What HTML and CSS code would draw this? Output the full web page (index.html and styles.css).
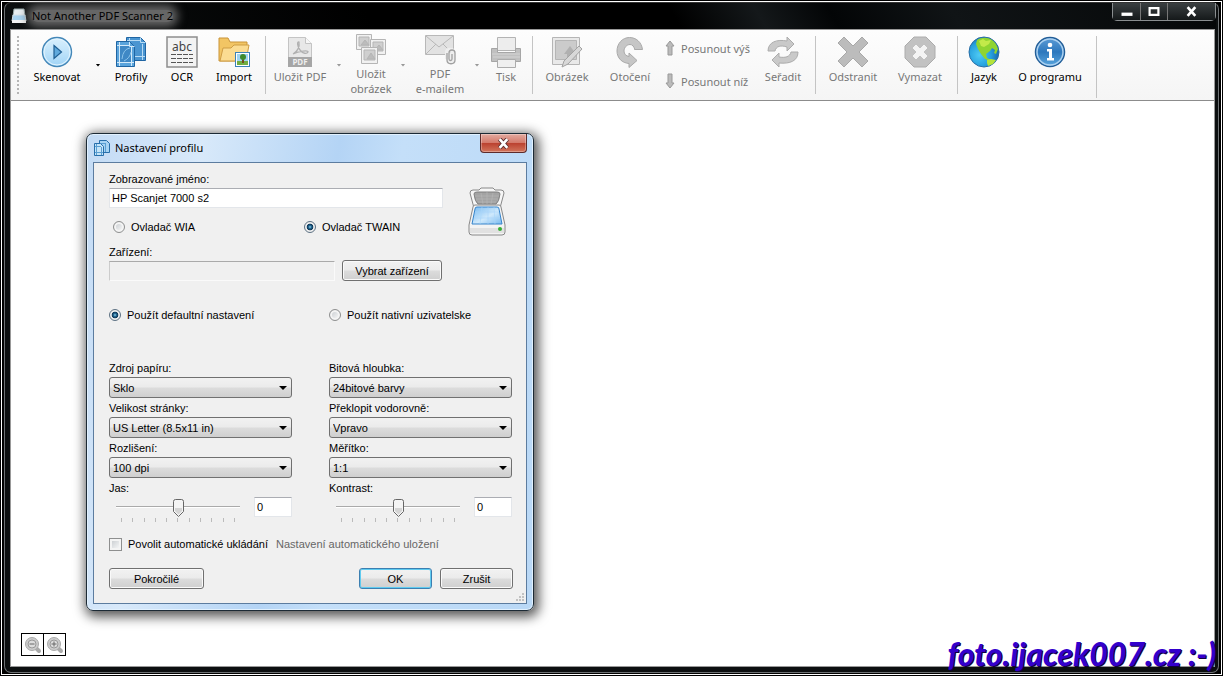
FILE: index.html
```html
<!DOCTYPE html>
<html lang="cs">
<head>
    <meta charset="UTF-8">
    <meta name="viewport" content="width=device-width, initial-scale=1.0">
    <title>Not Another PDF Scanner 2</title>
    <link rel="stylesheet" href="styles.css">
</head>
<body>

<div class="desktop">
<div class="window">
    <header class="titlebar">
        <svg class="title-icon" viewBox="0 0 16 16">
            <path d="M3 1h10l1 7H2z" fill="#e8eef2" stroke="#9aa"/>
            <path d="M2 7h12l1 6H1z" fill="#a9d3f0" stroke="#d8e2e8"/>
            <path d="M1 12h14v3H1z" fill="#f4f4f4"/>
        </svg>
        <h1 class="title">Not Another PDF Scanner 2</h1>
        <div class="window-controls">
            <button aria-label="Minimalizovat"><svg viewBox="0 0 12 10"><path d="M1 6h10v3H1z" fill="#fff"/></svg></button>
            <button aria-label="Maximalizovat"><svg viewBox="0 0 12 10"><path d="M2 2h8v6H2z" fill="none" stroke="#fff" stroke-width="2"/></svg></button>
            <button class="wide" aria-label="Zavřít"><svg viewBox="0 0 12 10"><path d="M2 1l7 8M9 1L2 9" stroke="#fff" stroke-width="2.4"/></svg></button>
        </div>
    </header>

    <main class="client">
        <nav class="toolbar">
            <span class="grip"></span>
            <button class="tool w-72">
                <svg viewBox="0 0 32 32">
                    <defs><linearGradient id="play" x2="0" y2="1"><stop stop-color="#d9f0fd"/><stop offset=".5" stop-color="#bfe3fa"/><stop offset="1" stop-color="#9fd3f6"/></linearGradient></defs>
                    <circle cx="16" cy="16" r="14.5" fill="url(#play)" stroke="#4487b8" stroke-width="1.4"/>
                    <circle cx="16" cy="16" r="13" fill="none" stroke="#e3f4fe"/>
                    <path d="M13 9.500l7.500 6.500-7.500 6.500z" fill="#5fa9dc" stroke="#1f5f93" stroke-width="1.200"/>
                </svg>
                Skenovat
            </button>
            <button class="arrow dark" aria-label="Další možnosti skenování"></button>
            <button class="tool w-56">
                <svg viewBox="0 0 32 32">
                    <path d="M11.500 1.500h14l5 5v18h-19z" fill="#4a95d1" stroke="#1f65a3"/>
                    <path d="M25.500 1.500v5h5M14.500 2v22M27.500 8v16M12 4.500h13M12 20.500h18" fill="none" stroke="#b9dcf5"/>
                    <path d="M1.500 5.500h13l5 5v20h-18z" fill="#5aa4dc" stroke="#1f65a3"/>
                    <path d="M5 10h11v17H5z" fill="#3f88c5"/>
                    <path d="M4.500 6v24M16.500 11v19M2 9.500h12M2 26.500h17M14.500 6v4.500h5" fill="none" stroke="#d3eafa"/>
                    <path d="M7 23q1-10 8-11M9 25q6-3 7-9" fill="none" stroke="#8cc3ea"/>
                </svg>
                Profily
            </button>
            <button class="tool w-46">
                <svg viewBox="0 0 32 32">
                    <rect x="1" y="1" width="30" height="30" fill="#f3f3f3" stroke="#8d8d8d" stroke-width="1.500"/>
                    <text x="16" y="14.500" class="abc">abc</text>
                    <path d="M5 18.500h22M5 22.500h22M5 26.500h22" stroke="#555" stroke-dasharray="5 1"/>
                </svg>
                OCR
            </button>
            <button class="tool w-58">
                <svg viewBox="0 0 32 32">
                    <path d="M1 25V2h9l2 4h17v19z" fill="#f2c564" stroke="#c99439"/>
                    <path d="M2 25l3-13h8l3-3h15l-3 16z" fill="#fbdc92" stroke="#cf9d45"/>
                    <rect x="17.500" y="16.500" width="14" height="14" fill="#fff" stroke="#3b82b8"/>
                    <path d="M19 18h11v11H19z" fill="#9ed4f2"/>
                    <path d="M19 25h11v4H19z" fill="#71ad42"/>
                    <path d="M24 22h2v5h-2z" fill="#744c20"/>
                    <circle cx="25" cy="21" r="3" fill="#3e8a2c"/>
                </svg>
                Import
            </button>
            <span class="separator first"></span>

            <button class="tool w-66" disabled>
                <svg viewBox="0 0 32 32">
                    <path d="M4.500 1.500h17l6 6v23h-23z" fill="#e8e8e8" stroke="#c4c4c4"/>
                    <path d="M21.500 1.500v6h6" fill="#f7f7f7" stroke="#c4c4c4"/>
                    <path d="M9 18c4-2 7-7 6-12-2-1-2 4 1 8s7 4 8 2-9-1-15 2z" fill="none" stroke="#b0b0b0" stroke-width="1.300"/>
                    <path d="M4 21h24v10H4z" fill="#a6a6a6"/>
                    <text x="16" y="29" class="pdf">PDF</text>
                </svg>
                Uložit PDF
            </button>
            <button class="arrow" aria-label="Možnosti PDF" disabled></button>
            <button class="tool tall w-52" disabled>
                <svg viewBox="0 0 32 32">
                    <g fill="#f1f1f1" stroke="#b5b5b5">
                        <path d="M1.500 1.500h15v15h-15z"/><path d="M4 4h10v9H4z" fill="#cfcfcf"/><path d="M6 12l4-5 4 5z" fill="#bcbcbc"/>
                        <path d="M15.500 6.500h15v15h-15z"/><path d="M18 9h10v9H18z" fill="#cfcfcf"/><path d="M20 17l4-5 4 5z" fill="#bcbcbc"/>
                        <path d="M6.500 14.500h16v16h-16z"/><path d="M9 17h11v10H9z" fill="#cfcfcf"/><path d="M12 26l4-6 4 6z" fill="#bcbcbc"/>
                    </g>
                </svg>
                Uložit<br>obrázek
            </button>
            <button class="arrow" aria-label="Možnosti obrázku" disabled></button>
            <button class="tool tall w-62" disabled>
                <svg viewBox="0 0 32 32">
                    <path d="M1.500 2.500h28v19h-28z" fill="#e2e2e2" stroke="#b8b8b8"/>
                    <path d="M2 3l13 11L29 3M2 21l10-10M29 21L19 11" fill="none" stroke="#b8b8b8"/>
                    <path d="M23 26v-7c0-3 6-3 6 0v8c0 3-4 3-4 0v-7" fill="none" stroke="#eee" stroke-width="4"/>
                    <path d="M23 20v7c0 5 8 5 8 0v-7c0-4-6-4-6 0v6c0 2 3 2 3 0v-5" fill="none" stroke="#a0a0a0" stroke-width="1.300"/>
                </svg>
                PDF<br>e-mailem
            </button>
            <button class="arrow" aria-label="Možnosti e-mailu" disabled></button>
            <button class="tool w-46" disabled>
                <svg viewBox="0 0 32 32">
                    <path d="M7.500 1.500h18v13h-18z" fill="#ededed" stroke="#b3b3b3"/>
                    <path d="M1.500 12.500h6v4h18v-4h5v13h-29z" fill="#c0c0c0" stroke="#a6a6a6"/>
                    <path d="M2 18h28M3 21h27" stroke="#d4d4d4"/>
                    <path d="M7.500 23.500h18v8h-18z" fill="#efefef" stroke="#acacac"/>
                </svg>
                Tisk
            </button>
            <span class="separator"></span>

            <button class="tool w-64" disabled>
                <svg viewBox="0 0 32 32">
                    <path d="M1.500 1.500h27v27h-27z" fill="#e9e9e9" stroke="#b5b5b5"/>
                    <path d="M4.500 4.500h21v19h-21z" fill="#cbcbcb" stroke="#b5b5b5"/>
                    <path d="M16 23v-5h-3l6-8 6 8h-3v5z" fill="#b0b0b0"/>
                    <path d="M28 10l3 3-14 15-6 3 2-6z" fill="#d8d8d8" stroke="#a3a3a3"/>
                </svg>
                Obrázek
            </button>
            <button class="tool w-62" disabled>
                <svg viewBox="0 0 32 32">
                    <path d="M21 13.500h7.500C27.500 6 22 1.500 15.500 1.500 8 1.500 3 8 3 15s5 12 12 12.500v4l8-7-8-7.500v3.500c-3-.5-5-2.500-5-5.500s2.500-6.500 6-6.500c2.500 0 4 2 5 5.500z" fill="#c6c6c6" stroke="#a9a9a9"/>
                </svg>
                Otočení
            </button>
            <div class="move">
                <button disabled><svg viewBox="0 0 10 16"><path d="M5 1l4 5H7v9H3V6H1z"/></svg>Posunout výš</button>
                <button disabled><svg viewBox="0 0 10 16"><path d="M5 15L1 10h2V1h4v9h2z"/></svg>Posunout níž</button>
            </div>
            <button class="tool w-56" disabled>
                <svg viewBox="0 0 32 32">
                    <path d="M1 15C1 6 10 3 20 5V1l7 7-7 7v-4c-6-2-11-1-12 4z" fill="#c9c9c9" stroke="#acacac"/>
                    <path d="M31 16c0 9-8 12-19 11v4l-7-7 7-7v4c6 1 11 0 12-5z" fill="#c9c9c9" stroke="#acacac"/>
                </svg>
                Seřadit
            </button>
            <span class="separator wide"></span>

            <button class="tool w-68" disabled>
                <svg viewBox="0 0 32 32"><path d="M7 1l9 9 9-9 6 6-9 9 9 9-6 6-9-9-9 9-6-6 9-9-9-9z" fill="#bcbcbc" stroke="#a8a8a8"/></svg>
                Odstranit
            </button>
            <button class="tool w-66" disabled>
                <svg viewBox="0 0 32 32">
                    <path d="M10 1h12l9 9v12l-9 9H10l-9-9V10z" fill="#c2c2c2" stroke="#acacac"/>
                    <path d="M12 8l4 4 4-4 4 4-4 4 4 4-4 4-4-4-4 4-4-4 4-4-4-4z" fill="#f4f4f4" stroke="#b0b0b0" stroke-width=".6"/>
                </svg>
                Vymazat
            </button>
            <span class="separator wide"></span>

            <button class="tool w-46">
                <svg viewBox="0 0 32 32">
                    <defs><radialGradient id="globe" cx=".35" cy=".6" r=".65"><stop stop-color="#4fcbf4"/><stop offset=".6" stop-color="#259fdd"/><stop offset="1" stop-color="#1a68ad"/></radialGradient></defs>
                    <circle cx="16" cy="16" r="15" fill="url(#globe)" stroke="#2a6ea6"/>
                    <path d="M9 4c4-3 11-3 15 0 3 2 5 5 6 9l-2 5-2-1 1-3-3-2-2 3-4 3 1 4 4 2v1l-6-2-4-5-3-5-2-5z" fill="#8fd431"/>
                    <path d="M19 24l4-1 5 1-3 4-5 2-1-3z" fill="#b5e339"/>
                    <path d="M11 5l4-2 3 2 5-1-2 4-5 3-3-1z" fill="#c3ea4a"/>
                </svg>
                Jazyk
            </button>
            <button class="tool w-86">
                <svg viewBox="0 0 32 32">
                    <defs><linearGradient id="info" x2="0" y2="1"><stop stop-color="#5c9cd6"/><stop offset=".5" stop-color="#2d78bd"/><stop offset="1" stop-color="#5ba7de"/></linearGradient></defs>
                    <circle cx="16" cy="16" r="14.500" fill="url(#info)" stroke="#235e97" stroke-width="1.500"/>
                    <circle cx="16" cy="16" r="13" fill="none" stroke="#acd1f0" stroke-width="1.500"/>
                    <circle cx="16" cy="9" r="2.300" fill="#fff"/>
                    <path d="M13 13h5v9h2v2.500h-7V22h2v-6.500h-2z" fill="#fff"/>
                </svg>
                O programu
            </button>
            <span class="separator end"></span>
        </nav>

        <section class="canvas">
            <div class="zoom-buttons">
                <button aria-label="Oddálit"><svg viewBox="0 0 18 18"><path d="M11 11l4 4" stroke="#aaa" stroke-width="4" stroke-linecap="round"/><circle cx="8" cy="8" r="6.500" fill="#ccc" stroke="#aaa"/><circle cx="8" cy="8" r="4" fill="#ddd" stroke="#999"/><path d="M5.500 8h5" stroke="#666"/></svg></button>
                <button aria-label="Přiblížit"><svg viewBox="0 0 18 18"><path d="M11 11l4 4" stroke="#aaa" stroke-width="4" stroke-linecap="round"/><circle cx="8" cy="8" r="6.500" fill="#ccc" stroke="#aaa"/><circle cx="8" cy="8" r="4" fill="#ddd" stroke="#999"/><path d="M5.500 8h5M8 5.500v5" stroke="#666"/></svg></button>
            </div>

            <div class="dialog" role="dialog" aria-labelledby="dialogTitle">
                <div class="dialog-title">
                    <svg viewBox="0 0 17 16">
                        <path d="M6.500.5h7l3 3v9h-10z" fill="#a6d3f3" stroke="#276fab"/>
                        <path d="M1.500 3.500h6l3 3v9h-9z" fill="#c5e4f8" stroke="#276fab"/>
                        <path d="M3.500 4v11M8.500 7v8M2 6.500h6M2 12.500h8M12.500 3v9M8 3.500h5" stroke="#5a9fd2" fill="none"/>
                    </svg>
                    <h2 id="dialogTitle">Nastavení profilu</h2>
                    <button class="dialog-close" aria-label="Zavřít"><svg viewBox="0 0 12 10"><path d="M2 1l7 8M9 1L2 9" stroke="#5b3030" stroke-width="4"/><path d="M2 1l7 8M9 1L2 9" stroke="#fff" stroke-width="2.400"/></svg></button>
                </div>
                <form class="dialog-body">
                    <div class="top">
                        <div class="top-fields">
                            <label for="name">Zobrazované jméno:</label>
                            <input class="text" type="text" id="name" value="HP Scanjet 7000 s2">
                            <div class="drivers">
                                <label class="choice"><input type="radio" name="driver">Ovladač WIA</label>
                                <label class="choice"><input type="radio" name="driver" checked>Ovladač TWAIN</label>
                            </div>
                            <label for="device">Zařízení:</label>
                            <div class="device">
                                <input class="text" type="text" id="device" disabled>
                                <button type="button" class="btn">Vybrat zařízení</button>
                            </div>
                        </div>
                        <svg class="scanner" viewBox="0 0 38 50">
                            <defs><linearGradient id="glass" x2="1" y2="1"><stop stop-color="#78baf0"/><stop offset=".55" stop-color="#cfe9fc"/><stop offset="1" stop-color="#79b9ee"/></linearGradient></defs>
                            <path d="M2 7q0-3 3-3h6l2-2h12l2 2h6q3 0 3 3l-4 15H6z" fill="#f6f6f6" stroke="#888"/>
                            <path d="M6 8q0-2 3-2h20q3 0 3 2-1 8-4 10H10Q7 16 6 8z" fill="#a3a3a3" stroke="#808080"/>
                            <path d="M7 10h24M8 13h22M10 16h18M13 7l2 11M19 6v12M25 7l-2 11" stroke="#b8b8b8" fill="none" stroke-width=".6"/>
                            <path d="M7 19h24q2 0 2 2l4 18v7q0 3-3 3H4q-3 0-3-3v-7l4-18q0-2 2-2z" fill="#f3f3f3" stroke="#888"/>
                            <path d="M9 21h20q2 0 2 2l3 15H4l3-15q0-2 2-2z" fill="url(#glass)" stroke="#3684cb"/>
                            <path d="M7 26h24M6 32h26M14 21l-2 17M20 21v17M26 21l1 17" stroke="#a7d5fa" stroke-width=".6"/>
                            <path d="M2 42h34v5H2z" fill="#e1e1e1"/>
                            <circle cx="32" cy="43" r="2" fill="#38ae35"/>
                        </svg>
                    </div>

                    <div class="columns modes">
                        <label class="choice"><input type="radio" name="mode" checked>Použít defaultní nastavení</label>
                        <label class="choice"><input type="radio" name="mode">Použít nativní uzivatelske</label>
                    </div>

                    <div class="columns">
                        <div class="field">
                            <label for="source">Zdroj papíru:</label>
                            <select id="source"><option>Sklo</option></select>
                        </div>
                        <div class="field">
                            <label for="depth">Bitová hloubka:</label>
                            <select id="depth"><option>24bitové barvy</option></select>
                        </div>
                        <div class="field">
                            <label for="size">Velikost stránky:</label>
                            <select id="size"><option>US Letter (8.5x11 in)</option></select>
                        </div>
                        <div class="field">
                            <label for="flip">Překlopit vodorovně:</label>
                            <select id="flip"><option>Vpravo</option></select>
                        </div>
                        <div class="field">
                            <label for="resolution">Rozlišení:</label>
                            <select id="resolution"><option>100 dpi</option></select>
                        </div>
                        <div class="field">
                            <label for="scale">Měřítko:</label>
                            <select id="scale"><option>1:1</option></select>
                        </div>
                        <div class="field">
                            <label for="brightness">Jas:</label>
                            <div class="slider">
                                <div class="slider-track">
                                    <input type="range" id="brightness" min="-100" max="100" value="0">
                                    <div class="ticks"><i></i><i></i><i></i><i></i><i></i><i></i><i></i><i></i><i></i><i></i><i></i></div>
                                </div>
                                <input class="text" type="text" value="0" aria-label="Hodnota jasu">
                            </div>
                        </div>
                        <div class="field">
                            <label for="contrast">Kontrast:</label>
                            <div class="slider">
                                <div class="slider-track">
                                    <input type="range" id="contrast" min="-100" max="100" value="0">
                                    <div class="ticks"><i></i><i></i><i></i><i></i><i></i><i></i><i></i><i></i><i></i><i></i><i></i></div>
                                </div>
                                <input class="text" type="text" value="0" aria-label="Hodnota kontrastu">
                            </div>
                        </div>
                    </div>

                    <div class="autosave">
                        <label class="choice"><input type="checkbox">Povolit automatické ukládání</label>
                        <a href="#">Nastavení automatického uložení</a>
                    </div>

                    <div class="actions">
                        <button type="button" class="btn advanced">Pokročilé</button>
                        <button type="button" class="btn default">OK</button>
                        <button type="button" class="btn">Zrušit</button>
                    </div>
                    <svg class="resize" viewBox="0 0 9 9"><path d="M6 0h2v2H6zM3 3h2v2H3zM6 3h2v2H6zM0 6h2v2H0zM3 6h2v2H3zM6 6h2v2H6z" fill="#c2c2c2"/></svg>
                </form>
            </div>
        </section>
    </main>
</div>
<div class="watermark">foto.ijacek007.cz :-)</div>
</div>

</body>
</html>
```
FILE: styles.css
```css
* {
    box-sizing: border-box;
}
body {
    margin: 0;
    padding: 1px;
    height: 100vh;
    background: #000;
    font-family: "Noto Sans", "Open Sans", sans-serif;
    font-size: 12px;
    color: #000;
}
button, input, select {
    font: inherit;
    color: inherit;
    margin: 0;
}
button {
    padding: 0;
    border: 0;
    background: none;
}
svg {
    display: block;
    flex: none;
}
.desktop {
    position: relative;
    height: 100%;
    padding: 0 2px 1px;
    border: 1px solid #fff;
}
.window {
    display: flex;
    flex-direction: column;
    height: 100%;
    padding: 0 2px 5px 5px;
    border: 1px solid #6d7173;
    border-top-color: #333;
    border-radius: 7px;
    background: #0c0f10;
}

/* title bar */
.titlebar {
    display: flex;
    align-items: center;
    height: 26px;
    flex: none;
    background: linear-gradient(60deg, #0c0f10 0%, #000 30%, #000 55%, #14181a 62%, #030506 68%, #101416 78%, #050708 100%);
}
.title-icon {
    width: 16px;
    height: 16px;
    margin: 0 5px 0 1px;
}
.title {
    margin: 0;
    font-size: 11px;
    font-weight: normal;
    line-height: 12px;
    background: #666;
    box-shadow: 0 0 10px 5px #666;
    border-radius: 8px;
}
.window-controls {
    display: flex;
    align-self: flex-start;
    margin-left: auto;
    border: 1px solid #8a8e90;
    border-top: 0;
    border-radius: 0 0 5px 5px;
}
.window-controls button {
    display: flex;
    align-items: center;
    justify-content: center;
    width: 27px;
    height: 17px;
    background: linear-gradient(#3a3f41, #15191a);
}
.window-controls button + button {
    border-left: 1px solid #777;
}
.window-controls .wide {
    width: 48px;
}
.window-controls svg {
    width: 14px;
    height: 11px;
}

/* toolbar */
.client {
    display: flex;
    flex-direction: column;
    flex: 1;
    margin-right: 1px;
    border: 1px solid #999;
    background: #fff;
}
.toolbar {
    display: flex;
    height: 71px;
    flex: none;
    padding-top: 6px;
    border-bottom: 1px solid #8c8c8c;
    background: linear-gradient(#fdfdfd, #f5f5f5);
    font-size: 11px;
    line-height: 15px;
}
.grip {
    width: 10px;
    height: 58px;
    flex: none;
    border-left: 6px solid transparent;
    background: repeating-linear-gradient(#b5b5b5 0 2px, transparent 2px 4px) left / 2px 100% no-repeat;
    background-clip: content-box;
}
.tool {
    display: flex;
    flex-direction: column;
    align-items: center;
    flex: none;
    white-space: nowrap;
}
.tool svg {
    width: 32px;
    height: 32px;
    margin-bottom: 1px;
}
.tool.tall {
    margin-top: -3px;
}
.tool:disabled, .move button:disabled {
    color: #777;
}
.w-46 { width: 46px; }
.w-52 { width: 52px; }
.w-56 { width: 56px; }
.w-58 { width: 58px; }
.w-62 { width: 62px; }
.w-64 { width: 64px; }
.w-66 { width: 66px; }
.w-68 { width: 68px; }
.w-72 { width: 72px; }
.w-86 { width: 86px; }
.abc, .pdf {
    font-size: 12px;
    text-anchor: middle;
    fill: #444;
}
.pdf {
    font-size: 8px;
    font-weight: bold;
    fill: #eee;
}
.arrow {
    width: 12px;
    height: 58px;
    flex: none;
}
.arrow.dark {
    width: 10px;
}
.arrow::before {
    content: "";
    display: block;
    margin: 0 auto;
    width: 5px;
    height: 3px;
    background: #999;
    clip-path: polygon(0 0, 100% 0, 50% 100%);
}
.arrow.dark::before {
    background: #000;
}
.separator {
    width: 1px;
    height: 58px;
    flex: none;
    margin: 0 2px 0 3px;
    background: #c4c4c4;
}
.separator.first {
    margin: 0 1px 0 2px;
}
.separator.wide {
    margin: 0 3px 0 4px;
}
.separator.end {
    height: 62px;
}
.move {
    display: flex;
    flex-direction: column;
    gap: 17px;
    width: 94px;
    padding: 4px 0 0 4px;
}
.move button {
    display: flex;
    align-items: center;
    gap: 6px;
    height: 16px;
    white-space: nowrap;
}
.move svg {
    width: 10px;
    height: 16px;
    fill: #bbb;
    stroke: #999;
}

/* work area */
.canvas {
    position: relative;
    display: flex;
    align-items: flex-end;
    flex: 1;
    padding: 10px;
}
.zoom-buttons {
    display: flex;
    border: 1px solid #000;
}
.zoom-buttons button {
    padding: 2px 1px 1px 2px;
}
.zoom-buttons button + button {
    border-left: 1px solid #000;
}
.zoom-buttons svg {
    width: 18px;
    height: 18px;
}

/* profile dialog */
.dialog {
    position: absolute;
    top: 32px;
    left: 75px;
    width: 448px;
    padding: 0 6px 6px;
    border: 1px solid #1c2a35;
    border-radius: 7px;
    background: linear-gradient(100deg, #c3dbf5 0, #d8e9fa 22%, #b4d4f5 48%, #c4dff9 60%, #b9d8f6 100%);
    box-shadow: inset 0 0 0 1px #e2f1fe, 2px 3px 12px 3px rgba(0, 0, 0, 0.65);
    font-family: "Liberation Sans", Arial, sans-serif;
    font-size: 11px;
    line-height: 14px;
}
.dialog-title {
    display: flex;
    align-items: center;
    height: 28px;
    font-family: "Noto Sans", "Open Sans", sans-serif;
}
.dialog-title svg {
    width: 17px;
    height: 16px;
}
.dialog-title h2 {
    margin: 0 auto 0 5px;
    font-size: 11px;
    font-weight: normal;
    line-height: 16px;
}
.dialog-close {
    display: flex;
    align-items: center;
    justify-content: center;
    align-self: flex-start;
    width: 47px;
    height: 19px;
    border: 1px solid #5d2b2b;
    border-top: 0;
    border-radius: 0 0 4px 4px;
    background: linear-gradient(#e3aaa0, #d47a6b 48%, #bb4230 52%, #d2755c);
    box-shadow: inset 0 0 0 1px rgba(255, 255, 255, 0.3);
}
.dialog-title .dialog-close svg {
    width: 14px;
    height: 11px;
}
.dialog-body {
    position: relative;
    padding: 9px 13px 14px 15px;
    border: 1px solid #5c7c9f;
    background: #f0f0f0;
}
.dialog label {
    display: block;
}
.text {
    display: block;
    width: 100%;
    height: 20px;
    padding: 0 2px;
    border: 1px solid #e3e6ea;
    border-top-color: #abadb3;
    background: #fff;
}
.text:disabled {
    background: #f0f0f0;
    border-color: #fafafa;
    border-top-color: #aaa;
    border-left-color: #ccc;
}
.top {
    display: flex;
    justify-content: space-between;
}
.top-fields {
    width: 334px;
}
.top-fields .text, .field select, .field .slider {
    margin-top: 2px;
}
.scanner {
    width: 38px;
    height: 50px;
    margin: 14px 7px 0 0;
}
.drivers {
    display: grid;
    grid-template-columns: 191px 1fr;
    padding: 12px 0 11px 4px;
}
.dialog .choice {
    display: flex;
    align-items: center;
    gap: 6px;
    white-space: nowrap;
}
.choice input {
    appearance: none;
    flex: none;
    width: 13px;
    height: 13px;
    border: 1px solid #8e8f8f;
    background: linear-gradient(135deg, #c2c6ca, #fff);
    box-shadow: inset 0 0 0 2px #f4f4f4;
}
.choice input[type="radio"] {
    width: 12px;
    height: 12px;
    border-radius: 50%;
}
.choice input[type="radio"]:checked {
    border-color: #5d7183;
    background: radial-gradient(circle at 50% 50%, #8cd4f2 0, #23658e 22%, #0d3556 42%, #f0f0f0 52%);
    box-shadow: none;
}
.device {
    display: flex;
    gap: 7px;
    margin-right: 1px;
}
.device .btn {
    width: 100px;
    flex: none;
    margin-top: 1px;
}
.columns {
    display: grid;
    grid-template-columns: 183px 183px;
    gap: 3px 37px;
}
.modes {
    margin: 27px 0 39px;
}
select {
    display: block;
    appearance: none;
    width: 100%;
    height: 21px;
    padding: 0 16px 0 3px;
    border: 1px solid #707070;
    border-radius: 3px;
    background:
        url("data:image/svg+xml,%3Csvg xmlns='http://www.w3.org/2000/svg' width='8' height='4'%3E%3Cpath d='M0 0h8L4 4z'/%3E%3C/svg%3E") right 4px center no-repeat,
        linear-gradient(#f2f2f2, #ebebeb 48%, #dcdcdc 52%, #cfcfcf);
}
.slider {
    display: flex;
    justify-content: space-between;
}
.slider .text {
    width: 38px;
}
.slider-track {
    width: 124px;
    margin-left: 7px;
}
input[type="range"] {
    display: block;
    appearance: none;
    width: 100%;
    height: 20px;
    background: linear-gradient(#aaa 50%, #fff 50%) center / 100% 2px no-repeat;
}
input[type="range"]::-webkit-slider-thumb {
    appearance: none;
    width: 11px;
    height: 19px;
    background: url("data:image/svg+xml,%3Csvg xmlns='http://www.w3.org/2000/svg' width='11' height='19'%3E%3Cpath d='M2.500 1.500h6q2 0 2 2v10l-5 5-5-5v-10q0-2 2-2z' fill='%23f4f4f4' stroke='%23666'/%3E%3Cpath d='M2 10h7v3l-3.500 3.500L2 13z' fill='%23d4d4d4'/%3E%3C/svg%3E") no-repeat;
}
.ticks {
    display: flex;
    justify-content: space-between;
    margin: 1px 5px 0;
}
.ticks i {
    width: 1px;
    height: 4px;
    background: #bbb;
}
.autosave {
    display: flex;
    gap: 8px;
    margin-top: 15px;
}
.autosave a {
    color: #666;
    text-decoration: none;
    white-space: nowrap;
}
.actions {
    display: flex;
    gap: 8px;
    margin-top: 17px;
}
.btn {
    width: 73px;
    height: 21px;
    border: 1px solid #707070;
    border-radius: 3px;
    background: linear-gradient(#f2f2f2, #ebebeb 48%, #dcdcdc 52%, #cfcfcf);
    box-shadow: inset 0 0 0 1px #fafafa;
}
.btn.advanced {
    width: 95px;
    margin-right: auto;
}
.btn.default {
    border-color: #3c7fb1;
    box-shadow: inset 0 0 0 1px #5fcbf0;
}
.resize {
    position: absolute;
    right: 1px;
    bottom: 1px;
    width: 9px;
    height: 9px;
}

/* signature over the bottom right corner */
.watermark {
    position: absolute;
    right: 5px;
    bottom: 0;
    font-family: Lato, sans-serif;
    font-size: 32px;
    font-style: italic;
    font-weight: 900;
    line-height: 40px;
    color: #3300cc;
    text-shadow: 1px 1px 0 #100040;
    white-space: nowrap;
}
```
